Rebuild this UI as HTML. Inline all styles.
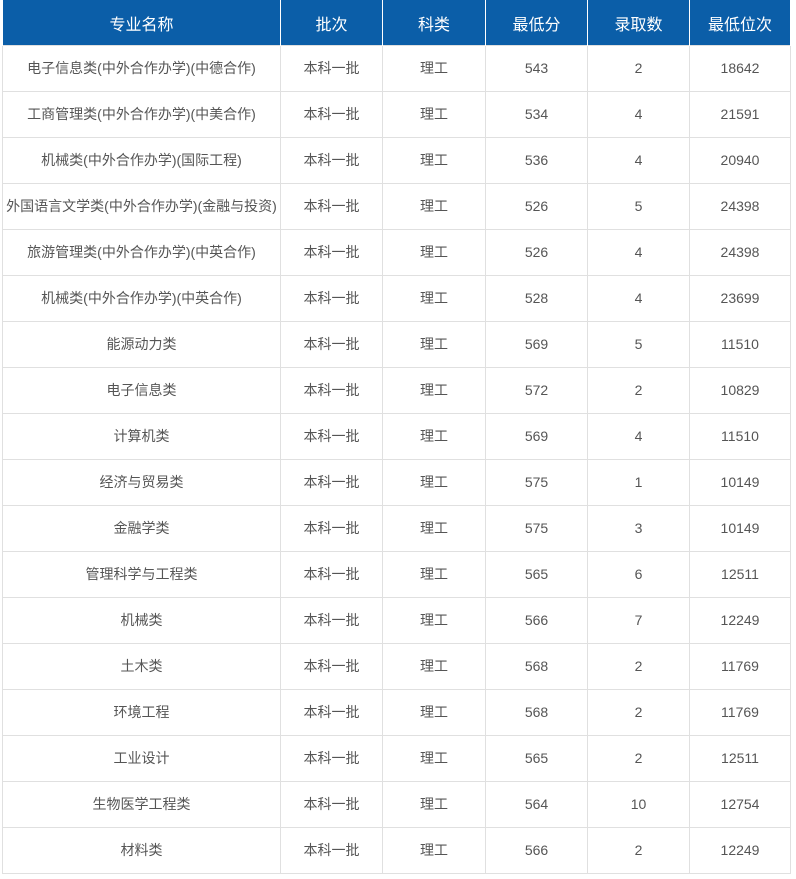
<!DOCTYPE html>
<html><head><meta charset="utf-8"><style>
body{margin:0;background:#fff;font-family:"Liberation Sans","Noto Sans CJK SC",sans-serif;}
table{position:absolute;left:2px;top:0;border-collapse:collapse;width:788px;table-layout:fixed;}
th{background:#0b5ea8;color:#fff;font-weight:normal;font-size:16px;height:45px;padding:0;border-left:1px solid #fff;border-right:1px solid #fff;}
td{height:43px;padding:0 0 2px 0;line-height:16px;text-align:center;font-size:14px;color:#555;border:1px solid #e0e0e0;white-space:nowrap;}
</style></head><body>
<table>
<colgroup><col style="width:278px"><col style="width:102px"><col style="width:103px"><col style="width:102px"><col style="width:102px"><col style="width:101px"></colgroup>
<tr><th>专业名称</th><th>批次</th><th>科类</th><th>最低分</th><th>录取数</th><th>最低位次</th></tr>
<tr><td>电子信息类(中外合作办学)(中德合作)</td><td>本科一批</td><td>理工</td><td>543</td><td>2</td><td>18642</td></tr>
<tr><td>工商管理类(中外合作办学)(中美合作)</td><td>本科一批</td><td>理工</td><td>534</td><td>4</td><td>21591</td></tr>
<tr><td>机械类(中外合作办学)(国际工程)</td><td>本科一批</td><td>理工</td><td>536</td><td>4</td><td>20940</td></tr>
<tr><td>外国语言文学类(中外合作办学)(金融与投资)</td><td>本科一批</td><td>理工</td><td>526</td><td>5</td><td>24398</td></tr>
<tr><td>旅游管理类(中外合作办学)(中英合作)</td><td>本科一批</td><td>理工</td><td>526</td><td>4</td><td>24398</td></tr>
<tr><td>机械类(中外合作办学)(中英合作)</td><td>本科一批</td><td>理工</td><td>528</td><td>4</td><td>23699</td></tr>
<tr><td>能源动力类</td><td>本科一批</td><td>理工</td><td>569</td><td>5</td><td>11510</td></tr>
<tr><td>电子信息类</td><td>本科一批</td><td>理工</td><td>572</td><td>2</td><td>10829</td></tr>
<tr><td>计算机类</td><td>本科一批</td><td>理工</td><td>569</td><td>4</td><td>11510</td></tr>
<tr><td>经济与贸易类</td><td>本科一批</td><td>理工</td><td>575</td><td>1</td><td>10149</td></tr>
<tr><td>金融学类</td><td>本科一批</td><td>理工</td><td>575</td><td>3</td><td>10149</td></tr>
<tr><td>管理科学与工程类</td><td>本科一批</td><td>理工</td><td>565</td><td>6</td><td>12511</td></tr>
<tr><td>机械类</td><td>本科一批</td><td>理工</td><td>566</td><td>7</td><td>12249</td></tr>
<tr><td>土木类</td><td>本科一批</td><td>理工</td><td>568</td><td>2</td><td>11769</td></tr>
<tr><td>环境工程</td><td>本科一批</td><td>理工</td><td>568</td><td>2</td><td>11769</td></tr>
<tr><td>工业设计</td><td>本科一批</td><td>理工</td><td>565</td><td>2</td><td>12511</td></tr>
<tr><td>生物医学工程类</td><td>本科一批</td><td>理工</td><td>564</td><td>10</td><td>12754</td></tr>
<tr><td>材料类</td><td>本科一批</td><td>理工</td><td>566</td><td>2</td><td>12249</td></tr>
</table>
</body></html>
